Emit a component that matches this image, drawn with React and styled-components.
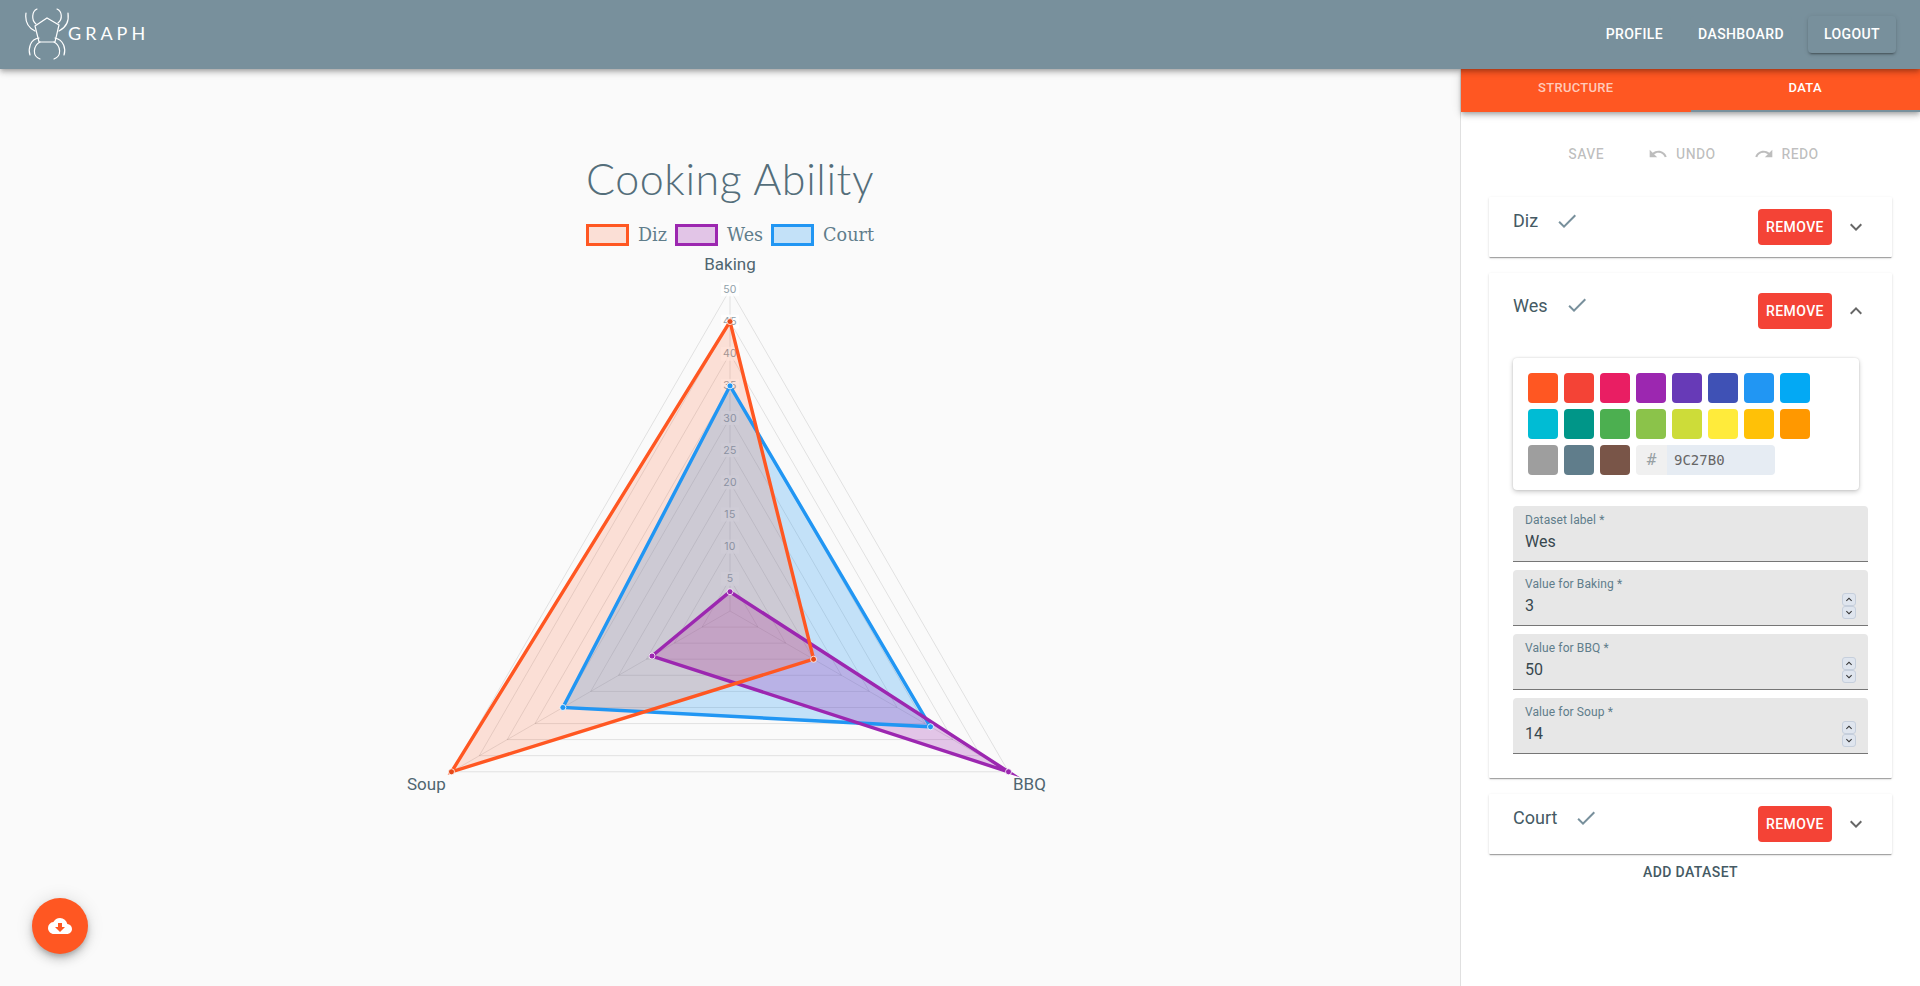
import React from 'react';
import styled, { createGlobalStyle } from 'styled-components';
import { MdCheck, MdExpandMore, MdExpandLess, MdUndo, MdRedo, MdCloudDownload } from 'react-icons/md';

const GlobalStyle = createGlobalStyle`
  html, body { margin: 0; height: 100%; overflow: hidden; }
  body { font-family: Roboto, 'Liberation Sans', sans-serif; background: #fafafa; }
  #root { height: 100%; }
`;

const Page = styled.div`
  display: flex;
  flex-direction: column;
  height: 986px;
  position: relative;
`;

const AppBar = styled.header`
  height: 69px;
  flex: none;
  display: flex;
  align-items: center;
  justify-content: space-between;
  padding: 0 24px;
  background: #78909c;
  box-shadow: 0 2px 4px -1px rgba(0,0,0,.2), 0 4px 5px rgba(0,0,0,.14), 0 1px 10px rgba(0,0,0,.12);
  position: relative;
  z-index: 3;
`;

const Logo = styled.div`
  display: flex;
  align-items: flex-start;
  padding-top: 3px;
  color: #fff;
`;

const LogoText = styled.span`
  font-family: Lato, sans-serif;
  font-weight: 400;
  font-size: 18px;
  letter-spacing: 4px;
  line-height: 22px;
  margin: 14px 0 0 -4px;
`;

const Nav = styled.nav`
  display: flex;
  align-items: center;
  gap: 16px;
`;

const NavButton = styled.button`
  height: 37px;
  padding: 0 ${p => (p.$raised ? 16 : 8)}px 1px;
  margin-right: ${p => p.$gap || 0}px;
  border: 0;
  border-radius: 4px;
  background: #78909c;
  color: #fff;
  font: 500 14px Roboto, sans-serif;
  letter-spacing: .4px;
  text-transform: uppercase;
  box-shadow: ${p => (p.$raised ? '0 3px 1px -2px rgba(0,0,0,.2), 0 2px 2px rgba(0,0,0,.14), 0 1px 5px rgba(0,0,0,.12)' : 'none')};
`;

const Body = styled.div`
  flex: 1;
  display: flex;
  min-height: 0;
`;

const Main = styled.main`
  flex: 1;
  display: flex;
  flex-direction: column;
  align-items: center;
  padding-top: 86px;
`;

const Title = styled.h1`
  margin: 0;
  font-family: Lato, sans-serif;
  font-weight: 300;
  font-size: 43px;
  line-height: 48px;
  color: #546e7a;
  letter-spacing: .6px;
`;

const Legend = styled.div`
  display: flex;
  gap: 8px;
  margin-top: 21px;
  height: 22px;
`;

const LegendItem = styled.div`
  display: flex;
  align-items: center;
  gap: 9px;
  font-family: 'DejaVu Serif', serif;
  font-size: 17.6px;
  color: #607d8b;
`;

const Swatch = styled.span`
  width: 43px;
  height: 22px;
  box-sizing: border-box;
  border: 3px solid ${p => p.$color};
  background: ${p => p.$fill};
`;

const ChartSvg = styled.svg`
  display: block;
  margin-top: 4px;
  overflow: visible;
`;

const Fab = styled.button`
  position: absolute;
  left: 32px;
  bottom: 32px;
  width: 56px;
  height: 56px;
  border: 0;
  border-radius: 50%;
  background: #ff5722;
  color: #fff;
  display: flex;
  align-items: center;
  justify-content: center;
  padding: 0;
  box-shadow: 0 3px 5px -1px rgba(0,0,0,.2), 0 6px 10px rgba(0,0,0,.14), 0 1px 18px rgba(0,0,0,.12);
`;

const Side = styled.aside`
  width: 460px;
  flex: none;
  box-sizing: border-box;
  background: #fff;
  border-left: 1px solid #e0e0e0;
`;

const Tabs = styled.div`
  display: flex;
  height: 43px;
  background: #ff5722;
  box-shadow: 0 2px 4px -1px rgba(0,0,0,.2), 0 4px 5px rgba(0,0,0,.14), 0 1px 10px rgba(0,0,0,.12);
  position: relative;
  z-index: 2;
`;

const Tab = styled.div`
  flex: 1;
  display: flex;
  align-items: center;
  justify-content: center;
  box-sizing: border-box;
  padding-bottom: ${p => (p.$active ? 5 : 7)}px;
  font-weight: 500;
  font-size: 13px;
  letter-spacing: .3px;
  color: ${p => (p.$active ? '#fff' : 'rgba(255,255,255,.7)')};
  border-bottom: ${p => (p.$active ? '2px solid #78909c' : '0')};
`;

const Panel = styled.div`
  padding: 24px 28px 0;
`;

const Actions = styled.div`
  display: flex;
  justify-content: center;
  gap: 22px;
  margin-bottom: 25px;
  padding-left: 6px;
`;

const ActionButton = styled.div`
  height: 36px;
  display: flex;
  align-items: center;
  gap: 8px;
  padding: 0 8px;
  margin-right: ${p => p.$gap || 0}px;
  font-weight: 500;
  font-size: 14px;
  letter-spacing: .4px;
  color: rgba(0,0,0,.26);
`;

const Card = styled.section`
  background: #fff;
  margin-bottom: 16px;
  border-radius: 1px;
  box-shadow: 0 2px 1px -1px rgba(0,0,0,.2), 0 1px 1px rgba(0,0,0,.14), 0 1px 3px rgba(0,0,0,.12);
`;

const CardHead = styled.div`
  display: flex;
  align-items: flex-start;
  padding: ${p => (p.$open ? '20px 24px 29px' : '12px 24px')};
`;

const CardLabel = styled.span`
  font-size: 18px;
  line-height: 24px;
  color: #455a64;
  margin-right: 17px;
  margin-top: ${p => (p.$open ? 1 : 0)}px;
`;

const CheckIcon = styled(MdCheck)`
  color: #78909c;
  font-size: 24px;
  margin-right: auto;
`;

const RemoveButton = styled.button`
  width: 74px;
  height: 36px;
  padding: 0;
  border: 0;
  border-radius: 4px;
  background: #f44336;
  color: #fff;
  font: 500 14px Roboto, sans-serif;
  letter-spacing: .4px;
`;

const Chevron = styled.span`
  display: flex;
  align-items: center;
  height: 36px;
  margin-left: 12px;
  font-size: 24px;
  color: rgba(0,0,0,.6);
`;

const CardBody = styled.div`
  padding: 0 24px 24px;
  display: flex;
  flex-direction: column;
`;

const Picker = styled.div`
  width: 346px;
  height: 132px;
  box-sizing: border-box;
  padding: 15px 0 0 15px;
  margin-bottom: 16px;
  border-radius: 4px;
  background: #fff;
  box-shadow: 0 0 2px rgba(0,0,0,.15), 0 2px 5px rgba(0,0,0,.2);
  display: grid;
  grid-template-columns: repeat(8, 30px);
  grid-auto-rows: 30px;
  gap: 6px;
`;

const Color = styled.span`
  border-radius: 4px;
  background: ${p => p.$color};
`;

const HexBox = styled.div`
  grid-column: span 4;
  display: flex;
  margin-right: -1px;
  border-radius: 4px;
  overflow: hidden;
  font-family: 'DejaVu Sans Mono', monospace;
  font-size: 14px;
  line-height: 30px;
`;

const HexHash = styled.span`
  width: 31px;
  text-align: center;
  font-size: 16px;
  background: #f0f0f0;
  color: #98a1a4;
`;

const HexValue = styled.span`
  flex: 1;
  padding-left: 7px;
  background: #e6ecf3;
  color: #666;
`;

const Fields = styled.div`
  display: flex;
  flex-direction: column;
  gap: 8px;
`;

const Field = styled.div`
  height: 56px;
  box-sizing: border-box;
  padding: 7px 12px 0;
  background: #e7e7e7;
  border-radius: 4px 4px 0 0;
  border-bottom: 1px solid #767676;
  display: flex;
  align-items: flex-start;
  justify-content: space-between;
`;

const FieldLabel = styled.div`
  font-size: 12px;
  line-height: 14px;
  letter-spacing: .1px;
  color: #607d8b;
`;

const FieldValue = styled.div`
  font-size: 16px;
  line-height: 20px;
  margin-top: 5px;
  color: #37474f;
`;

const Spinner = styled.div`
  display: flex;
  flex-direction: column;
  margin-top: 16px;
`;

const SpinButton = styled.span`
  width: 14px;
  height: 13px;
  box-sizing: border-box;
  display: flex;
  align-items: center;
  justify-content: center;
  font-size: 13px;
  background: #dfe5ee;
  border: 1px solid #c6cfdc;
  border-radius: 3px;
  color: #333;
`;

const AddButton = styled.div`
  height: 36px;
  margin-top: -16px;
  display: flex;
  align-items: center;
  justify-content: center;
  font-weight: 500;
  font-size: 14px;
  letter-spacing: .4px;
  color: #455a64;
`;

const palette = [
  '#ff5722', '#f44336', '#e91e63', '#9c27b0', '#673ab7', '#3f51b5', '#2196f3', '#03a9f4',
  '#00bcd4', '#009688', '#4caf50', '#8bc34a', '#cddc39', '#ffeb3b', '#ffc107', '#ff9800',
  '#9e9e9e', '#607d8b', '#795548',
];

const datasets = [
  { label: 'Diz', color: '#ff5722', fill: 'rgba(255,87,34,.17)', point: '#e64a19', values: [45, 15, 50] },
  { label: 'Wes', color: '#9c27b0', fill: 'rgba(156,39,176,.25)', point: '#9c27b0', values: [3, 50, 14] },
  { label: 'Court', color: '#2196f3', fill: 'rgba(33,150,243,.25)', point: '#2196f3', values: [35, 36, 30] },
];

const CX = 400;
const CY = 361;
const R = 321.6;
const angles = [-90, 30, 150].map(a => (a * Math.PI) / 180);

const pt = (i, v) => [
  CX + (Math.cos(angles[i]) * R * v) / 50,
  CY + (Math.sin(angles[i]) * R * v) / 50,
];
const poly = vals => vals.map((v, i) => pt(i, v).map(n => n.toFixed(1)).join(',')).join(' ');
const ticks = [5, 10, 15, 20, 25, 30, 35, 40, 45, 50];
const drawOrder = [...datasets].reverse();

const RadarChart = () => (
  <ChartSvg width="800" height="560" viewBox="0 0 800 560">
    {ticks.map(t => (
      <polygon key={t} points={poly([t, t, t])} fill="none" stroke="rgba(0,0,0,.1)" />
    ))}
    {[0, 1, 2].map(i => {
      const [x, y] = pt(i, 50);
      return <line key={i} x1={CX} y1={CY} x2={x} y2={y} stroke="rgba(0,0,0,.1)" />;
    })}
    {ticks.map(t => {
      const y = CY - (R * t) / 50;
      return (
        <g key={t}>
          <rect x={CX - 9} y={y - 7} width="18" height="14" fill="rgba(255,255,255,.75)" />
          <text x={CX} y={y + 3.5} textAnchor="middle" fontFamily="Inter, sans-serif" fontSize="10.5" letterSpacing=".3" fill="#90a0a9">{t}</text>
        </g>
      );
    })}
    {drawOrder.map(d => <polygon key={d.label} points={poly(d.values)} fill={d.fill} />)}
    {drawOrder.map(d => (
      <polygon
        key={d.label}
        points={poly(d.values)}
        fill="none"
        stroke={d.color}
        strokeWidth="3.4"
        strokeLinejoin="miter"
        strokeMiterlimit="10"
      />
    ))}
    {drawOrder.map(d => d.values.map((v, i) => {
      const [x, y] = pt(i, v);
      return <circle key={d.label + i} cx={x} cy={y} r="3" fill={d.point} stroke="rgba(255,255,255,.8)" />;
    }))}
    <g fontFamily="Roboto, sans-serif" fontSize="17" fill="#4f6570">
      <text x={CX} y="20" textAnchor="middle">Baking</text>
      <text x="77" y="540">Soup</text>
      <text x="683" y="540">BBQ</text>
    </g>
  </ChartSvg>
);

const SpiderLogo = () => (
  <svg width="48" height="56" viewBox="0 0 48 56" fill="none" stroke="#fff" strokeWidth="1.2" strokeLinecap="round">
    <polygon points="11,18 23,10 35,17 31,34 15,34" />
    <path d="M11 23C3 19 1 12 2 5" />
    <path d="M12 16C7 12 8 3 13 1" />
    <path d="M35 23C43 19 45 12 44 5" />
    <path d="M34 15C39 11 38 3 33 1" />
    <path d="M15 30C6 31 4 41 6 47" />
    <path d="M16 34C9 38 8 48 16 51" />
    <path d="M31 30C40 32 42 41 40 47" />
    <path d="M30 34C37 38 38 48 30 51" />
  </svg>
);

const DatasetCard = ({ label, open, children }) => (
  <Card>
    <CardHead $open={open}>
      <CardLabel $open={open}>{label}</CardLabel>
      <CheckIcon />
      <RemoveButton>REMOVE</RemoveButton>
      <Chevron>{open ? <MdExpandLess /> : <MdExpandMore />}</Chevron>
    </CardHead>
    {children}
  </Card>
);

const NumberField = ({ label, value, spin }) => (
  <Field>
    <div>
      <FieldLabel>{label} *</FieldLabel>
      <FieldValue>{value}</FieldValue>
    </div>
    {spin && (
      <Spinner>
        <SpinButton><MdExpandLess /></SpinButton>
        <SpinButton><MdExpandMore /></SpinButton>
      </Spinner>
    )}
  </Field>
);

export default function App() {
  return (
    <Page>
      <GlobalStyle />
      <AppBar>
        <Logo>
          <SpiderLogo />
          <LogoText>GRAPH</LogoText>
        </Logo>
        <Nav>
          <NavButton $gap={3}>Profile</NavButton>
          <NavButton>Dashboard</NavButton>
          <NavButton $raised>Logout</NavButton>
        </Nav>
      </AppBar>
      <Body>
        <Main>
          <Title>Cooking Ability</Title>
          <Legend>
            {datasets.map(d => (
              <LegendItem key={d.label}>
                <Swatch $color={d.color} $fill={d.fill} />
                {d.label}
              </LegendItem>
            ))}
          </Legend>
          <RadarChart />
        </Main>
        <Side>
          <Tabs>
            <Tab>STRUCTURE</Tab>
            <Tab $active>DATA</Tab>
          </Tabs>
          <Panel>
            <Actions>
              <ActionButton $gap={6}>SAVE</ActionButton>
              <ActionButton><MdUndo size={20} />UNDO</ActionButton>
              <ActionButton><MdRedo size={20} />REDO</ActionButton>
            </Actions>
            <DatasetCard label="Diz" />
            <DatasetCard label="Wes" open>
              <CardBody>
                <Picker>
                  {palette.map(c => <Color key={c} $color={c} />)}
                  <HexBox>
                    <HexHash>#</HexHash>
                    <HexValue>9C27B0</HexValue>
                  </HexBox>
                </Picker>
                <Fields>
                  <NumberField label="Dataset label" value="Wes" />
                  <NumberField label="Value for Baking" value="3" spin />
                  <NumberField label="Value for BBQ" value="50" spin />
                  <NumberField label="Value for Soup" value="14" spin />
                </Fields>
              </CardBody>
            </DatasetCard>
            <DatasetCard label="Court" />
            <AddButton>ADD DATASET</AddButton>
          </Panel>
        </Side>
      </Body>
      <Fab aria-label="download"><MdCloudDownload size={24} /></Fab>
    </Page>
  );
}
